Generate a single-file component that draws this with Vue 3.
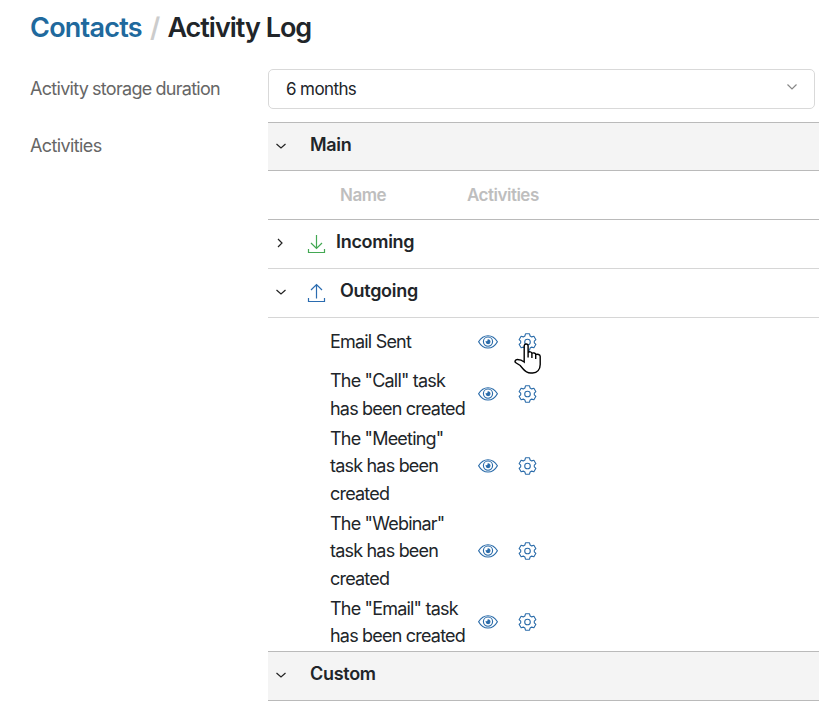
<script setup>
const tasks = [
  { name: 'Email Sent', kind: 'first', pointer: true },
  { name: 'The "Call" task has been created', kind: '' },
  { name: 'The "Meeting" task has been created', kind: '' },
  { name: 'The "Webinar" task has been created', kind: '' },
  { name: 'The "Email" task has been created', kind: '' },
]
</script>

<template>
  <main class="page">
    <h1 class="crumbs"><a class="link">Contacts</a><span class="slash">/</span><span class="current">Activity Log</span></h1>
    <div class="field">
      <label class="label">Activity storage duration</label>
      <div class="select">
        <span class="value">6 months</span>
        <svg class="caret" viewBox="0 0 12 8"><path d="M1.5 1.5 6 6l4.500-4.500" /></svg>
      </div>
    </div>
    <div class="field list-field">
      <label class="label list-label">Activities</label>
      <section class="list">
        <div class="group">
          <svg class="chevron" viewBox="0 0 12 12"><path d="M1.500 4 6 8l4.500-4" /></svg>
          <span class="title">Main</span>
        </div>
        <div class="head"><span class="head-name">Name</span><span>Activities</span></div>
        <div class="direction">
          <svg class="chevron" viewBox="0 0 12 12"><path d="M3 2 7 6 3 10" /></svg>
          <svg class="arrow green" viewBox="0 0 20 20"><path d="M9.500 1v13.500M4 9l5.500 5.500L15 9M1.500 15v3.500h16V15" /></svg>
          <span class="title incoming">Incoming</span>
        </div>
        <div class="direction">
          <svg class="chevron" viewBox="0 0 12 12"><path d="M1.500 4 6 8l4.500-4" /></svg>
          <svg class="arrow blue" viewBox="0 0 20 20"><path d="M9.500 15.500V1.500M4 7l5.500-5.500L15 7M1.500 15v3.500h16V15" /></svg>
          <span class="title outgoing">Outgoing</span>
        </div>
        <div class="tasks">
          <div v-for="task in tasks" :key="task.name" class="task" :class="task.kind">
            <span class="name">{{ task.name }}</span>
            <svg class="eye" viewBox="0 0 20 14">
              <path d="M.6 6.700C3 2.800 6.200.7 10 .7s7 2.100 9.400 6C17 11 13.800 13 10 13S3 11 .6 6.700Z" />
              <circle cx="10" cy="6.600" r="4.600" />
              <path class="pupil" d="M10.200 4.800a1.900 1.900 0 1 1-2 2c1 .200 2-.7 2-2Z" />
            </svg>
            <span class="settings">
              <svg class="gear" viewBox="0 0 18 18">
                <path d="M7 .8h4l.6 2.200 1.600.9 2.200-.6 2 3.400L15.800 8.200v1.600l1.600 1.500-2 3.400-2.200-.6-1.600.9-.6 2.200H7L6.400 15l-1.600-.9-2.200.6-2-3.400L2.200 9.800V8.200L.6 6.700l2-3.400 2.200.6L6.400 3Z" />
                <circle cx="9" cy="9" r="2.800" />
              </svg>
              <svg v-if="task.pointer" class="hand" viewBox="0 0 28 31">
                <path d="M10.200 19V3c0-2.700 3.900-2.700 3.900 0V9.500c1-1.200 3.600-.8 3.800.8 1.200-.8 3.600-.3 3.800 1.200 1.800-.7 4.500 0 4.500 2V21.500c0 5-3 8.500-7.500 8.500h-2c-3.500 0-6-2-8-4.500l-2.500-3-4-2.500c-2.300-1.500-.8-3.500 1.200-3.500 2.800 0 4.600.7 6.800 2.500ZM14.100 9.500v5M17.900 10.500v4.500M21.700 11.500V16" />
              </svg>
            </span>
          </div>
        </div>
        <div class="group last">
          <svg class="chevron" viewBox="0 0 12 12"><path d="M1.500 4 6 8l4.500-4" /></svg>
          <span class="title">Custom</span>
        </div>
      </section>
    </div>
  </main>
</template>

<style>
body { background: #fff; }
</style>

<style scoped>
.page {
  box-sizing: border-box;
  width: 819px;
  height: 710px;
  padding: 10px 0 0 30px;
  overflow: hidden;
  font: 400 18px/27.5px Inter, "Liberation Sans", sans-serif;
  letter-spacing: -0.35px;
  color: #212529;
}
.page * { box-sizing: border-box; }
svg { display: block; flex: none; fill: none; }
.crumbs {
  display: flex;
  height: 59px;
  margin: 0;
  font-size: 27px;
  line-height: 36px;
  font-weight: 580;
  letter-spacing: -0.75px;
}
.current { letter-spacing: -1px; }
.link { color: #20699d; }
.slash { margin: 0 8px; color: #ccc; }
.field { display: flex; }
.label { width: 238px; flex: none; padding-top: 6px; color: #666; letter-spacing: -0.7px; word-spacing: -0.5px; }
.select {
  display: flex;
  align-items: center;
  width: 547px;
  height: 40px;
  padding: 0 16px 0 17px;
  border: 1px solid #d9d9d9;
  border-radius: 5px;
}
.value { font-size: 17px; letter-spacing: -0.6px; padding-top: 1px; }
.caret { width: 12px; height: 8px; margin: -5px 0 0 auto; stroke: #888; stroke-width: 1.2; }
.list-field { margin-top: 13px; }
.list-label { padding-top: 10px; letter-spacing: -0.6px; }
.list { flex: 1; }
.group {
  display: flex;
  align-items: center;
  height: 49px;
  padding: 0 0 3px 7px;
  border: solid #bababa;
  border-width: 1px 0;
  background: #f4f4f4;
}
.group .title { margin-left: 23px; }
.last { height: 50px; padding-bottom: 5px; }
.chevron { width: 12px; height: 12px; margin-top: 2px; stroke: #222; stroke-width: 1.2; }
.title { font-weight: 570; letter-spacing: -0.3px; }
.head {
  display: flex;
  height: 49px;
  padding: 11px 0 0 72px;
  border-bottom: 1px solid #bababa;
  color: #bebebe;
  font-size: 17px;
  font-weight: 600;
  letter-spacing: -0.5px;
}
.head-name { width: 127px; }
.direction {
  display: flex;
  align-items: center;
  height: 49px;
  padding: 0 0 4px 7px;
  border-bottom: 1px solid #d6d6d6;
}
.arrow { width: 20px; height: 20px; margin: 3px 0 0 20px; stroke-width: 1.2; }
.green { stroke: #43a853; }
.blue { stroke: #2b6cb0; }
.incoming { margin-left: 9px; }
.outgoing { margin-left: 13px; }
.tasks { padding-left: 62px; }
.task { display: flex; align-items: center; padding: 1.25px 0; }
.first { height: 48px; }
.name { width: 148px; padding-right: 10px; letter-spacing: -0.8px; }
.eye { width: 20px; height: 14px; margin-bottom: 1px; stroke: #2b6caa; stroke-width: 1.15; }
.pupil { fill: #2b6caa; }
.settings { position: relative; margin: 0 0 1px 20px; }
.gear { width: 19px; height: 18px; stroke: #2b6caa; stroke-width: 1.1; stroke-linejoin: round; }
.hand { position: absolute; z-index: 1; top: 10px; left: -4px; width: 28px; height: 31px; fill: #fff; stroke: #000; stroke-width: 1.4; }
</style>
